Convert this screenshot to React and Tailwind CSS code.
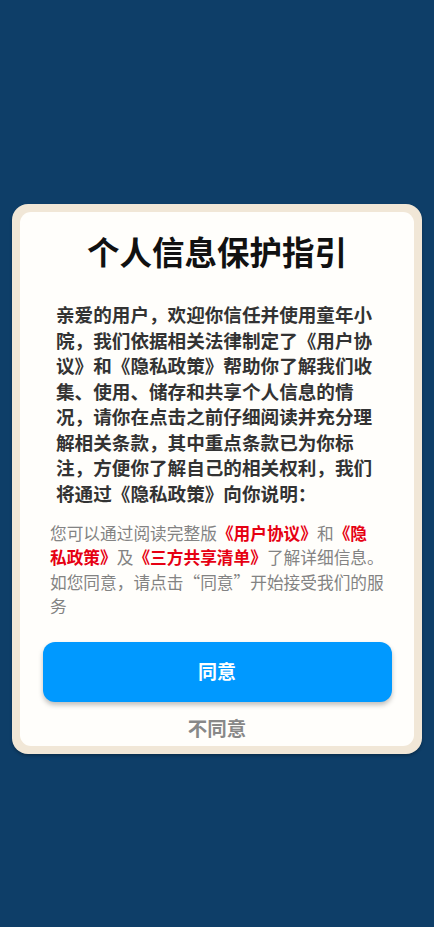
export default function App() {
  const font = { fontFamily: '"Noto Sans CJK SC", "Noto Sans", sans-serif' };
  return (
    <div className="w-full h-[927px] bg-[#0e3e68] pt-[204px] px-[12px]" style={font}>
      <div className="w-[410px] rounded-[16px] bg-[#f1e7d7] p-[8px] shadow-[0_2px_3px_rgba(0,0,0,0.25)]">
        <div className="rounded-[11px] bg-[#fffefb] pt-[17px] pb-[4px] flex flex-col items-center">
          <h1 className="text-[32.5px] leading-[44px] font-bold text-[#111]">个人信息保护指引</h1>
          <p className="mt-[28px] w-full px-[36px] text-[18.6px] leading-[25.5px] font-bold text-[#333]">
            亲爱的用户，欢迎你信任并使用童年小院，我们依据相关法律制定了《用户协议》和《隐私政策》帮助你了解我们收集、使用、储存和共享个人信息的情况，请你在点击之前仔细阅读并充分理解相关条款，其中重点条款已为你标注，方便你了解自己的相关权利，我们将通过《隐私政策》向你说明：
          </p>
          <p className="mt-[16px] w-full pl-[30px] pr-[24px] text-[16.7px] leading-[24.4px] text-[#838383]">
            您可以通过阅读完整版<span className="font-bold text-[#e60012]">《用户协议》</span>和<span className="font-bold text-[#e60012]">《隐<br />私政策》</span>及<span className="font-bold text-[#e60012]">《三方共享清单》</span>了解详细信息。如您同意，请点击“同意”开始接受我们的服务
          </p>
          <button className="mt-[23px] w-[349px] h-[60px] rounded-[12px] bg-[#0099ff] text-white text-[19px] font-bold shadow-[0_3px_5px_rgba(0,0,0,0.25)]">
            同意
          </button>
          <div className="mt-[12px] text-[19.5px] leading-[28px] font-bold text-[#888]">不同意</div>
        </div>
      </div>
    </div>
  );
}
